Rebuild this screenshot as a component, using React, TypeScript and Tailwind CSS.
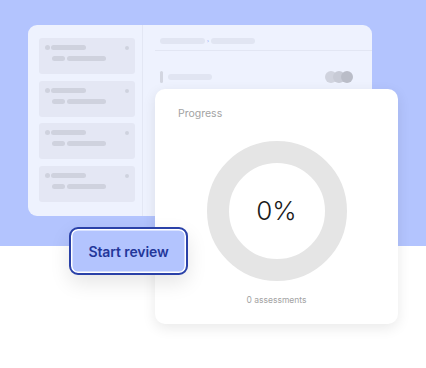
import React from "react";

function SideCard() {
  return (
    <div className="h-[36px] w-[96px] rounded-[3px] bg-[#e4e7f4] flex items-start justify-between pl-[6px] pr-[6px] pt-[7px]">
      <div className="flex flex-col gap-[6px]">
        <div className="flex items-center gap-[1px]">
          <div className="w-[5px] h-[5px] rounded-full bg-[#cfd2de]" />
          <div className="w-[35px] h-[5px] rounded-full bg-[#cfd2de]" />
        </div>
        <div className="flex items-center gap-[2px] pl-[7px]">
          <div className="w-[13px] h-[5px] rounded-full bg-[#cfd2de]" />
          <div className="w-[39px] h-[5px] rounded-full bg-[#cfd2de]" />
        </div>
      </div>
      <div className="w-[4px] h-[4px] rounded-full bg-[#cfd2de] mt-[1px]" />
    </div>
  );
}

export default function App() {
  return (
    <div
      className="relative w-[426px] h-[368px] bg-white overflow-hidden"
      style={{ fontFamily: "Inter, 'Liberation Sans', sans-serif" }}
    >
      <div className="h-[246px] bg-[#b3c4fe] pt-[25px] pl-[28px]">
        <div className="w-[344px] h-[191px] rounded-[9px] bg-[#eef2fe] flex overflow-hidden">
          <div className="w-[115px] border-r border-[#e3e7f4] pt-[13px] pl-[11px] flex flex-col gap-[6.5px]">
            <SideCard />
            <SideCard />
            <SideCard />
            <SideCard />
          </div>
          <div className="flex-1 pl-[12px]">
            <div className="h-[26px] border-b border-[#e2e6f3] pt-[13px] pl-[5px] flex items-start gap-[2px]">
              <div className="w-[45px] h-[6px] rounded-full bg-[#e1e5f2]" />
              <div className="text-[5px] leading-[6px] text-[#8aa2f5]">›</div>
              <div className="w-[44px] h-[6px] rounded-full bg-[#e1e5f2]" />
            </div>
            <div className="pt-[20px] pl-[5px] pr-[19px] flex items-center justify-between">
              <div className="flex items-center gap-[5px]">
                <div className="w-[3px] h-[12px] rounded-full bg-[#d3d6e1]" />
                <div className="w-[44px] h-[6px] rounded-full bg-[#e1e5f2]" />
              </div>
              <div className="flex items-center">
                <div className="w-[12px] h-[12px] rounded-full bg-[#d0d3de]" />
                <div className="w-[12px] h-[12px] rounded-full bg-[#c8cbd6] -ml-[4px]" />
                <div className="w-[12px] h-[12px] rounded-full bg-[#babdc8] -ml-[4px]" />
              </div>
            </div>
          </div>
        </div>
      </div>

      <div className="absolute left-[155px] top-[89px] w-[243px] h-[235px] bg-white rounded-[10px] shadow-[0_4px_14px_rgba(0,0,0,0.09)] flex flex-col items-center">
        <div className="self-start pl-[23px] pt-[18px] text-[10.5px] leading-[14px] text-[#a3a3a3]">
          Progress
        </div>
        <div className="mt-[20px] w-[140px] h-[140px] rounded-full border-[22px] border-[#e5e5e5] flex items-center justify-center">
          <span className="text-[26px] font-light text-[#1a1a1a] leading-none">0%</span>
        </div>
        <div className="mt-[13px] text-[8.5px] text-[#a3a3a3] leading-[12px]">0 assessments</div>
      </div>

      <div className="absolute left-[69px] top-[227px] w-[119px] h-[48px] rounded-[9px] border-2 border-[#2a41a8] bg-[#b3c4fe] shadow-[inset_0_0_0_1.5px_#ffffff,0_8px_20px_rgba(0,0,0,0.1)] flex items-center justify-center">
        <span className="text-[14px] font-semibold text-[#23379a] tracking-[-0.1px]">Start review</span>
      </div>
    </div>
  );
}
